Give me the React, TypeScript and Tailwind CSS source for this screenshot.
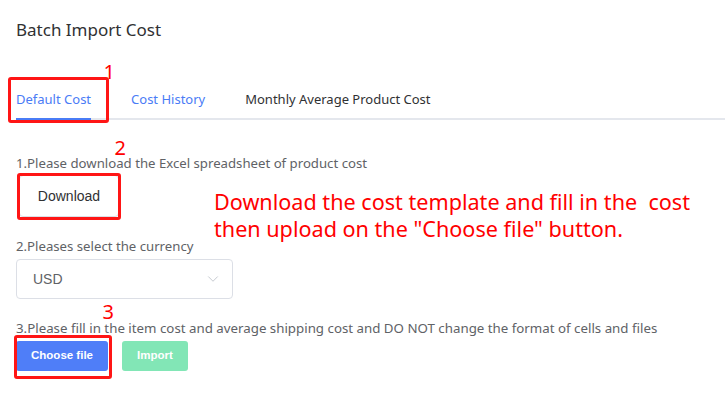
import { ChevronDown } from "lucide-react";

const RED = "border-[#ff1515]";

export default function App() {
  return (
    <div className="relative w-[725px] h-[416px] overflow-hidden bg-white font-['Noto_Sans',sans-serif] text-[#303133]">
      <div className="pl-4">
        {/* Title */}
        <h1 className="pt-[19px] text-[17px] leading-[22px] text-[#303133]">Batch Import Cost</h1>

        {/* Tabs */}
        <div className="mt-[39px] flex h-10 items-center border-b-2 border-[#e4e7ed] text-[13px]">
          <div className="relative flex h-full items-center pr-5 pt-[2px] text-[#4a7cf6]">
            Default Cost
            <span className="absolute -bottom-[2px] left-0 right-5 h-[2px] bg-[#4a7cf6]" />
            {/* annotation 1 */}
            <span className={`absolute -left-2 -top-[3px] -bottom-[5px] right-[2px] rounded-[3px] border-[3px] ${RED}`} />
            <span className="absolute -top-[20px] -right-[4px] text-[20px] leading-6 text-[#ff0000]">1</span>
          </div>
          <div className="flex h-full items-center px-5 pt-[2px] text-[#4a7cf6]">Cost History</div>
          <div className="flex h-full items-center px-5 pt-[2px] text-[#303133]">Monthly Average Product Cost</div>
        </div>

        {/* Step 1 */}
        <p className="mt-[33px] text-[13.2px] leading-5 text-[#606266]">
          1.Please download the Excel spreadsheet of product cost
        </p>
        <div className="relative ml-[3px] mt-[2px] w-[100px]">
          <button className="flex h-[42px] w-full items-center justify-center rounded border border-[#dcdfe6] bg-white font-['Liberation_Sans',sans-serif] text-[14px] text-[#303133]">
            Download
          </button>
          <span className={`absolute -inset-x-[2px] -top-[2px] -bottom-[3px] rounded-[3px] border-[3px] ${RED}`} />
          <span className="absolute -top-[39px] -right-[7px] text-[20px] leading-6 text-[#ff0000]">2</span>
        </div>

        {/* Step 2 */}
        <p className="mt-[19px] text-[13.2px] leading-5 text-[#606266]">2.Pleases select the currency</p>
        <div className="mt-[3px] flex h-10 w-[217px] items-center justify-between rounded border border-[#dcdfe6] pl-4 pr-[10px] font-['Liberation_Sans',sans-serif] text-[14px] text-[#606266]">
          <span>USD</span>
          <ChevronDown className="h-[18px] w-[18px] text-[#c0c4cc]" strokeWidth={1.2} />
        </div>

        {/* Step 3 */}
        <p className="mt-[19px] text-[13.3px] leading-5 text-[#606266]">
          3.Please fill in the item cost and average shipping cost and DO NOT change the format of cells and files
        </p>
        <div className="mt-[3px] flex gap-[14px] font-['Liberation_Sans',sans-serif] text-[11.5px] font-bold text-white">
          <div className="relative">
            <button className="flex h-[30px] w-[92px] items-center justify-center rounded-[3px] bg-[#4f7ef8]">
              Choose file
            </button>
            <span className={`absolute -left-[2px] -right-[4px] -top-[6px] -bottom-[8px] rounded-[3px] border-[3px] ${RED}`} />
            <span className="absolute -top-[41px] -right-[6px] font-['Noto_Sans',sans-serif] text-[20px] font-normal leading-6 text-[#ff0000]">
              3
            </span>
          </div>
          <button className="flex h-[30px] w-[66px] items-center justify-center rounded-[3px] bg-[#82e6b6]">
            Import
          </button>
        </div>
      </div>

      {/* Annotation note */}
      <div className="absolute left-[214px] top-[188px] whitespace-pre text-[21.6px] leading-[27px] text-[#ff0000]">
        {'Download the cost template and fill in the  cost\nthen upload on the "Choose file" button.'}
      </div>
    </div>
  );
}
